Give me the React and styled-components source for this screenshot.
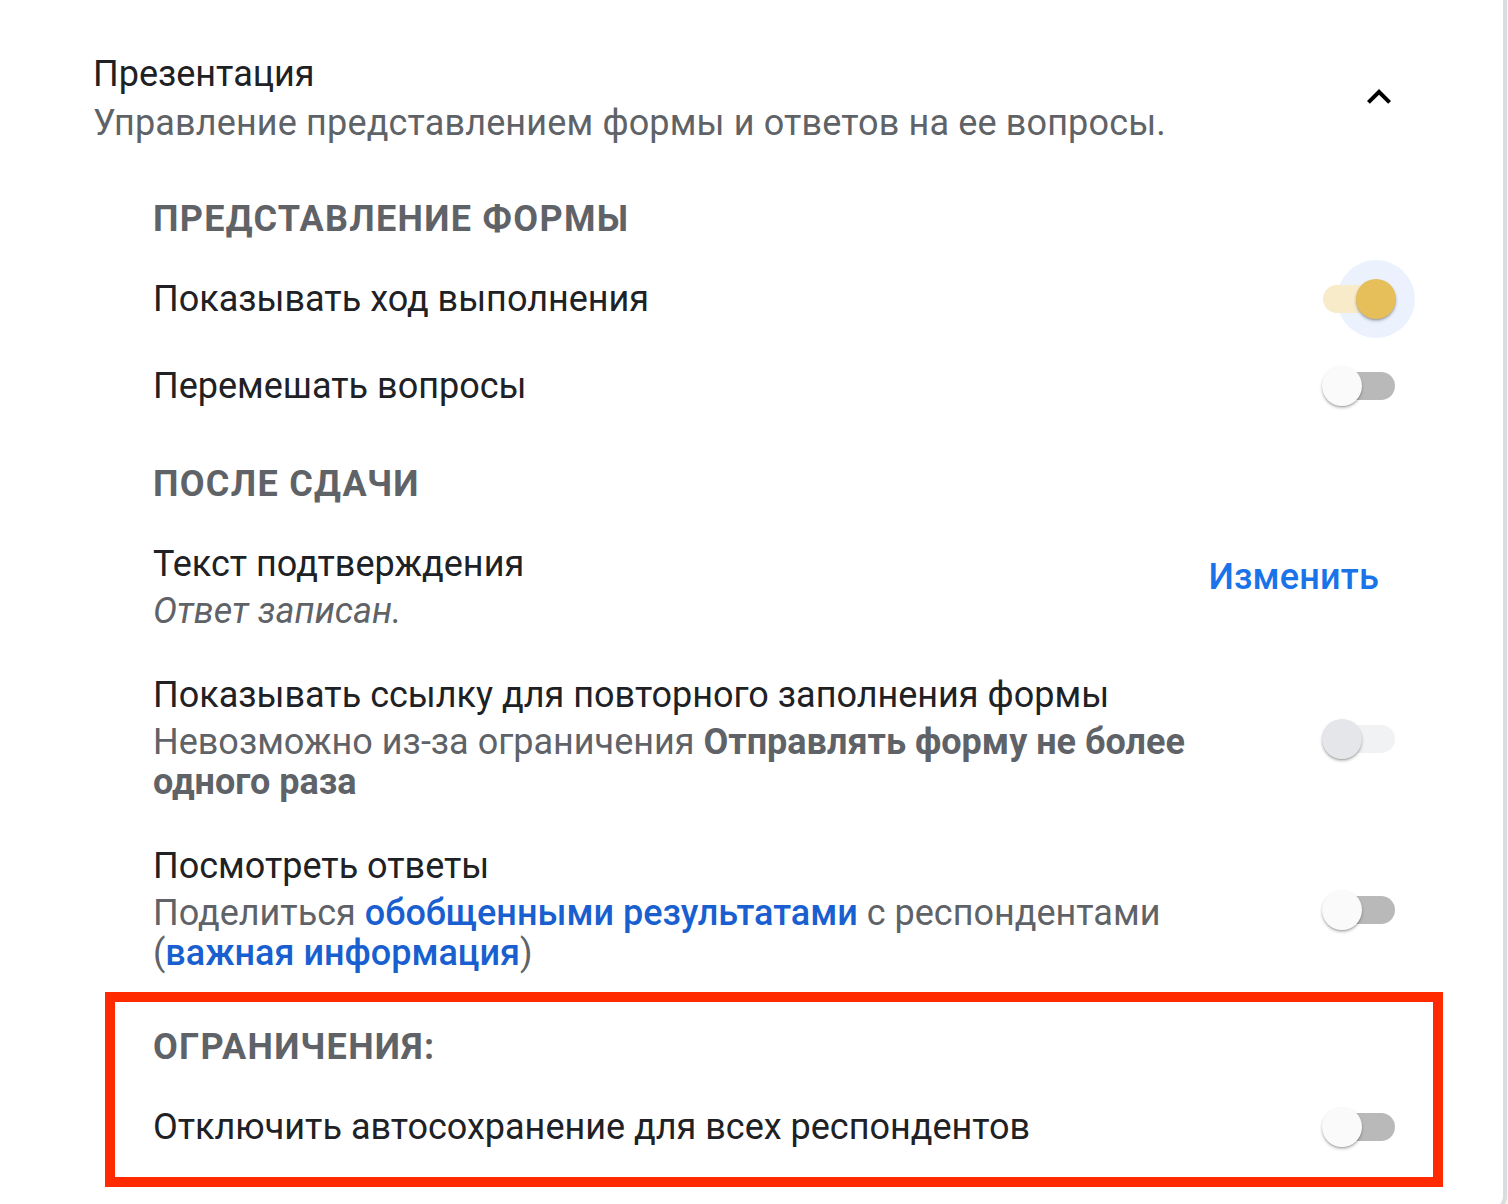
import React from 'react'
import styled, { createGlobalStyle } from 'styled-components'

const GlobalStyle = createGlobalStyle`
    body {
        margin: 0;
        background: #fdf6ea;
        font-family: Roboto, "Liberation Sans", Arial, sans-serif;
    }
`;

const Card = styled.div`
    box-sizing: border-box;
    width: 1507px;
    min-height: 1212px;
    background: #fff;
    border-right: 4px solid #dadce0;
    border-bottom: 4px solid #dadce0;
    border-bottom-right-radius: 16px;
    padding: 54px 107px 12px 93px;
`;

const Header = styled.div`
    display: flex;
    align-items: center;
    justify-content: space-between;
    margin-bottom: 56px;
`;

const Title = styled.div`
    font-size: 36px;
    line-height: 40px;
    color: #202124;
`;

const Subtitle = styled.div`
    margin-top: 9px;
    font-size: 36px;
    line-height: 40px;
    color: #5f6368;
    letter-spacing: 0.15px;
`;

const Chevron = styled.button`
    width: 48px;
    height: 48px;
    padding: 0;
    margin: -4px -7px 0 0;
    border: none;
    background: none;
    display: flex;
    align-items: center;
    justify-content: center;
`;

const Content = styled.div`
    padding-left: 60px;
`;

const SectionTitle = styled.div`
    margin: ${({ $top }) => $top || 0}px 0 18px;
    font-size: 36px;
    line-height: 40px;
    font-weight: 700;
    letter-spacing: 1.3px;
    text-transform: uppercase;
    color: #5f6368;
`;

const Row = styled.div`
    display: flex;
    align-items: center;
    gap: 64px;
    padding: ${({ $top }) => $top || 22}px 0 22px;
`;

const RowText = styled.div`
    flex: 1;
    min-width: 0;
`;

const RowTitle = styled.div`
    font-size: 36px;
    line-height: 40px;
    color: #202124;
`;

const RowSub = styled.div`
    margin-top: 7px;
    font-size: 36px;
    line-height: 40px;
    color: #5f6368;
    font-style: ${({ $italic }) => ($italic ? 'italic' : 'normal')};
`;

const Strong = styled.b`
    font-weight: 700;
`;

const Link = styled.span`
    color: #1a5fd0;
    font-weight: 500;
`;

const EditButton = styled.button`
    align-self: flex-start;
    margin: 13px 17px 0 0;
    padding: 0;
    border: none;
    background: none;
    font-family: inherit;
    font-size: 36px;
    line-height: 40px;
    font-weight: 500;
    letter-spacing: 0.2px;
    color: #1a73e8;
`;

const RedBox = styled.div`
    margin: -3px -47px 0 -48px;
    padding: 25px 37px 8px 38px;
    border: 10px solid #ff2a00;
`;

const Switch = styled.div`
    position: relative;
    flex-shrink: 0;
    width: 74px;
    height: 40px;
`;

const Track = styled.div`
    position: absolute;
    left: 1px;
    top: 6px;
    width: 72px;
    height: 28px;
    border-radius: 14px;
    background: ${({ $on, $disabled }) =>
        $on ? '#f7ebc9' : $disabled ? '#f1f2f4' : '#b9b9b9'};
`;

const Halo = styled.div`
    position: absolute;
    left: 15px;
    top: -19px;
    width: 78px;
    height: 78px;
    border-radius: 50%;
    background: #ebf2fd;
`;

const Thumb = styled.div`
    position: absolute;
    top: 0;
    left: ${({ $on }) => ($on ? 34 : 0)}px;
    width: 40px;
    height: 40px;
    border-radius: 50%;
    background: ${({ $on, $disabled }) =>
        $on ? '#e7bf5a' : $disabled ? '#e5e6e9' : '#fafafa'};
    box-shadow: 0 2px 3px rgba(0, 0, 0, 0.25), 0 1px 1px rgba(0, 0, 0, 0.12);
`;

const Toggle = ({ on, disabled }) => (
    <Switch>
        {on && <Halo />}
        <Track $on={on} $disabled={disabled} />
        <Thumb $on={on} $disabled={disabled} />
    </Switch>
)

const App = () => {
    return (
        <>
            <GlobalStyle />
            <Card>
                <Header>
                    <div>
                        <Title>Презентация</Title>
                        <Subtitle>Управление представлением формы и ответов на ее вопросы.</Subtitle>
                    </div>
                    <Chevron>
                        <svg width="48" height="48" viewBox="0 0 24 24">
                            <path d="M12 8l-6 6 1.41 1.41L12 10.83l4.59 4.58L18 14z" fill="#000" />
                        </svg>
                    </Chevron>
                </Header>
                <Content>
                    <SectionTitle>Представление формы</SectionTitle>
                    <Row>
                        <RowText><RowTitle>Показывать ход выполнения</RowTitle></RowText>
                        <Toggle on />
                    </Row>
                    <Row $top={25}>
                        <RowText><RowTitle>Перемешать вопросы</RowTitle></RowText>
                        <Toggle />
                    </Row>

                    <SectionTitle $top={36}>После сдачи</SectionTitle>
                    <Row>
                        <RowText>
                            <RowTitle>Текст подтверждения</RowTitle>
                            <RowSub $italic>Ответ записан.</RowSub>
                        </RowText>
                        <EditButton>Изменить</EditButton>
                    </Row>
                    <Row>
                        <RowText>
                            <RowTitle>Показывать ссылку для повторного заполнения формы</RowTitle>
                            <RowSub>
                                Невозможно из-за ограничения <Strong>Отправлять форму не более одного раза</Strong>
                            </RowSub>
                        </RowText>
                        <Toggle disabled />
                    </Row>
                    <Row>
                        <RowText>
                            <RowTitle>Посмотреть ответы</RowTitle>
                            <RowSub>
                                Поделиться <Link>обобщенными результатами</Link> с респондентами
                                (<Link>важная информация</Link>)
                            </RowSub>
                        </RowText>
                        <Toggle />
                    </Row>

                    <RedBox>
                        <SectionTitle>Ограничения:</SectionTitle>
                        <Row>
                            <RowText><RowTitle>Отключить автосохранение для всех респондентов</RowTitle></RowText>
                            <Toggle />
                        </Row>
                    </RedBox>
                </Content>
            </Card>
        </>
    )
}

export default App
